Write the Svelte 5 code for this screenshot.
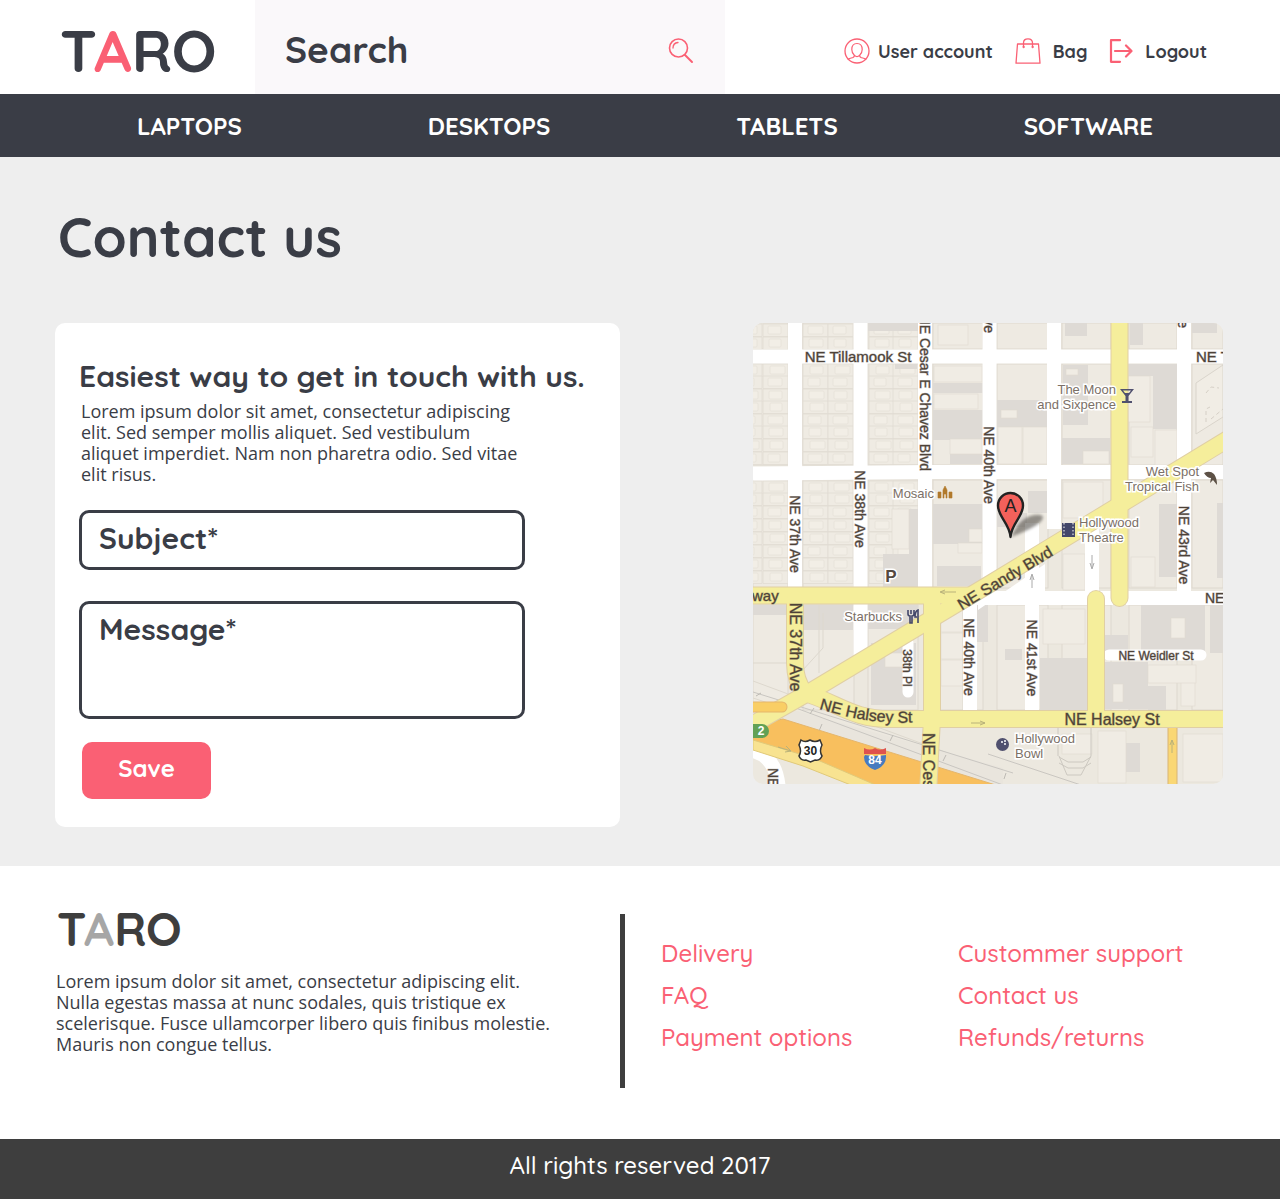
<script>
  const nav = ['LAPTOPS', 'DESKTOPS', 'TABLETS', 'SOFTWARE'];
  const links = ['Delivery', 'Custommer support', 'FAQ', 'Contact us', 'Payment options', 'Refunds/returns'];

  // City blocks: [x, y, width, height]
  const rowBands = [[0, 26], [41, 101], [157, 108], [282, 105]];
  const colBands = [[0, 35], [50, 51], [115, 50], [180, 50], [244, 51], [309, 49], [376, 48], [439, 31]];
  const blocks = rowBands.flatMap(([y, h]) => colBands.map(([x, w]) => [x, y, w, h]));

  // Small house lots inside the residential blocks: [x, y]
  const lots = [];
  for (const x of [-16, 10, 50, 75, 116, 140]) {
    for (const y of [1, 14, 41, 53, 66, 78, 91, 103, 116, 129, 158, 170, 183, 196, 209, 222, 235, 248]) {
      lots.push([x, y]);
    }
  }

  const buildings = [
    [115, 0, 50, 8], [142, 41, 22, 5], [180, 60, 50, 10], [180, 87, 50, 30], [197, 131, 33, 10], [180, 181, 50, 40],
    [156, 186, 9, 45], [130, 231, 35, 33], [184, 243, 44, 20], [244, 77, 51, 27], [275, 168, 19, 22], [244, 190, 30, 14],
    [310, 42, 25, 60], [309, 115, 48, 26], [312, 0, 22, 13], [377, 0, 13, 22], [400, 41, 24, 65], [376, 41, 26, 12],
    [439, 0, 25, 10], [406, 181, 18, 73], [464, 180, 6, 75], [388, 282, 64, 46], [457, 282, 13, 48], [287, 335, 47, 52],
    [351, 312, 24, 18], [352, 339, 43, 47], [395, 363, 18, 24], [50, 282, 50, 25], [0, 282, 35, 10], [115, 282, 50, 24],
    [118, 320, 45, 62], [252, 326, 17, 11], [373, 420, 14, 29], [224, 282, 11, 37]
  ];
  const yards = [
    [181, 43, 48, 16], [181, 71, 44, 15], [197, 116, 32, 15], [185, 2, 30, 20], [248, 87, 16, 8], [245, 104, 24, 37],
    [270, 104, 24, 37], [313, 46, 12, 6], [330, 128, 26, 13], [375, 53, 22, 46], [378, 104, 22, 30], [402, 107, 22, 35],
    [139, 186, 17, 40], [216, 206, 13, 13], [205, 220, 24, 10], [310, 159, 40, 36], [290, 286, 42, 35], [418, 295, 14, 20],
    [360, 361, 10, 18], [428, 345, 14, 38], [395, 342, 48, 18], [188, 283, 22, 26], [188, 310, 22, 26], [188, 337, 22, 26],
    [132, 330, 18, 14], [310, 231, 22, 36], [378, 234, 24, 30], [430, 411, 40, 48], [309, 411, 30, 20], [345, 408, 28, 52]
  ];

  const streets = [
    'M42 0V270', 'M107.500 0V335', 'M172 0V275', 'M236.500 0V275', 'M301 0V206', 'M431 0V275',
    'M217 282V390', 'M279 200V390', 'M339 195V275',
    'M0 33.500H470', 'M0 150.500L180 149H470', 'M180 275H470'
  ];
  const yellow = [
    'M366.500 -10V275', 'M343 276V396', 'M-10 272.500H215', 'M480 113L235 262L60 367L-10 407',
    'M42 276V340Q42 358 52 370', 'M179 273V396L175 470', 'M52 370C85 380 100 397 140 396H480'
  ];

  // Street names: [text, x, y, rotation, size, anchor]
  const names = [
    ['NE Tillamook St', 105, 33, 0, 15], ['NE Tillamook', 443, 33, 0, 15, 'start'],
    ['NE Cesar E Chavez Blvd', 172, 148, 90, 14, 'end'], ['NE 37th Ave', 42, 211, 90, 14],
    ['NE 38th Ave', 107, 186, 90, 14], ['NE 40th Ave', 236, 142, 90, 14],
    ['NE 43rd Ave', 431, 222, 90, 14], ['NE 37th Ave', 42, 324, 90, 16],
    ['NE 40th Ave', 216, 334, 90, 14], ['NE 41st Ave', 279, 335, 90, 14],
    ['38th Pl', 154, 345, 90, 12], ['NE Sandy Blvd', 252, 255, -31, 16],
    ['NE Halsey St', 359, 396, 0, 16], ['NE Weidler St', 403, 333, 0, 12],
    ['NE Cesar', 175, 410, 90, 16, 'start'], ['way', -1, 272, 0, 15, 'start'],
    ['NE Broadway', 452, 275, 0, 14, 'start'], ['NE 36th', 20, 445, 90, 14, 'start'],
    ['Ave', 236, 10, 90, 14, 'end'], ['Ave', 430, 5, 90, 14, 'end']
  ];
  const places = [
    ['Mosaic', 181, 170, 'end'], ['The Moon', 363, 66, 'end'], ['and Sixpence', 363, 81, 'end'],
    ['Wet Spot', 446, 148, 'end'], ['Tropical Fish', 446, 163, 'end'], ['Hollywood', 326, 199, 'start'],
    ['Theatre', 326, 214, 'start'], ['Starbucks', 149, 293, 'end'], ['Hollywood', 262, 415, 'start'], ['Bowl', 262, 430, 'start']
  ];
</script>

<div class="page">
  <header class="top">
    <a class="logo" href="#home">T<span>A</span>RO</a>
    <form class="search">
      <input type="search" placeholder="Search" aria-label="Search" />
      <button type="submit" aria-label="Search">
        <svg width="26" height="26" viewBox="0 0 26 26">
          <circle cx="10.500" cy="10" r="9" stroke-width="1.600" />
          <path d="M5 10Q5 5 10 4.500" stroke-width="1.300" />
          <path d="M17 17L24 24" stroke-width="2" />
        </svg>
      </button>
    </form>
    <div class="account">
      <a href="#account">
        <svg width="26" height="26" viewBox="0 0 26 26">
          <circle cx="13" cy="13" r="12" stroke-width="1.300" />
          <path d="M13 5.500c-3.500 0-5.200 2.700-5.200 6 0 2.600 1 4.400 2.500 5.700.3 1.300-.3 2-1.500 2.400-2 .5-3.600.8-4.600 1.700M13 5.500c3.500 0 5.200 2.700 5.200 6 0 2.600-1 4.400-2.500 5.700-.3 1.300.3 2 1.500 2.400 2 .5 3.600.8 4.600 1.700M10.300 17.200Q13 20 15.700 17.200" stroke-width="1.200" />
        </svg>
        User account
      </a>
      <a class="bag" href="#bag">
        <svg width="26" height="26" viewBox="0 0 26 26">
          <path d="M2.500 6H23.500L25 25.200H1Z" stroke-width="1.300" />
          <path d="M8.500 9V5Q8.500 .8 13 .8T17.500 5V9" stroke-width="1.300" />
          <circle cx="8.500" cy="9" r=".7" /><circle cx="17.500" cy="9" r=".7" />
        </svg>
        Bag
      </a>
      <a class="logout" href="#logout">
        <svg width="24" height="26" viewBox="0 0 24 26">
          <path d="M11 2.200H2V23.800H11" stroke-width="2.200" />
          <path d="M6 13H22M17 7.500L22.500 13L17 18.500" stroke-width="2.200" />
        </svg>
        Logout
      </a>
    </div>
  </header>

  <nav>
    {#each nav as item}
      <a href="#{item.toLowerCase()}">{item}</a>
    {/each}
  </nav>

  <main>
    <h1>Contact us</h1>
    <div class="columns">
      <section class="card">
        <h2>Easiest way to get in touch with us.</h2>
        <p>Lorem ipsum dolor sit amet, consectetur adipiscing elit. Sed semper mollis aliquet. Sed vestibulum aliquet imperdiet. Nam non pharetra odio. Sed vitae elit risus.</p>
        <form>
          <input type="text" placeholder="Subject*" aria-label="Subject" required />
          <textarea placeholder="Message*" aria-label="Message" required></textarea>
          <button type="submit">Save</button>
        </form>
      </section>

      <svg class="map" viewBox="0 0 470 461" role="img" aria-label="Map of NE Sandy Blvd">
        <rect width="470" height="461" fill="#ece8df" />
        <g fill="#eeeae2" stroke="#d9d4cb" stroke-width=".8">
          {#each blocks as [x, y, w, h]}<rect {x} {y} width={w} height={h} />{/each}
        </g>
        <g stroke="#e1dcd3" stroke-width=".8">
          {#each lots as [x, y], i}
            <path d="M{x} {y}h25v12.500h-25z" fill="#efebe3" />
            <rect x={x + 5 + (i % 3)} y={y + 2} width={15 - (i % 4)} height="8" rx="1" fill="#f2eee6" stroke="#e6e1d8" />
          {/each}
        </g>
        <g fill="#dedad5">
          {#each buildings as [x, y, w, h]}<rect {x} {y} width={w} height={h} />{/each}
        </g>
        <g fill="#f0ece4" stroke="#dfdad0" stroke-width=".6">
          {#each yards as [x, y, w, h]}<rect {x} {y} width={w} height={h} />{/each}
        </g>
        <path d="M0 358L235 445M0 375L235 452M70 290V325L38 360M0 340H35M66 282V350M210 282V387" fill="none" stroke="#ddd8ce" />
        <path d="M443 111V60L470 42V94Z" fill="#f1ede5" stroke="#d9d4cb" />
        <path d="M453 99V86l4-2 M458 96L470 86M453 70l5-6 8 1" fill="none" stroke="#d5cfc6" stroke-dasharray="4 3" />

        <g fill="none" stroke="#fff" stroke-width="14">
          {#each streets as d}<path {d} />{/each}
          <path d="M0 428Q25 434 26 470" />
          <path d="M155 320V369M356 332H448" stroke-width="11" stroke-linecap="round" />
        </g>
        <path d="M225 287L292 241V282H225Z" fill="#fff" />

        <path d="M0 378L30 384L250 445V461H110L0 419Z" fill="#e9e5dd" />
        <path d="M0 369L260 450M24 378L250 462M235 431L340 466" fill="none" stroke="#c9c6c1" />
        <path d="M3 373l5-3M57 391l4-6M66 408l3-7M137 418l3-6M190 438l3-6M251 456l2-6" stroke="#bdbab4" />
        <path d="M0 402L30 396L262 468H125L60 438L0 420Z" fill="#f8bf5e" stroke="#e5b66c" />
        <path d="M0 417L60 435L132 466H108L50 443L0 427Z" fill="#f8e391" stroke="#e0c979" />
        <path d="M419.500 400V470" stroke="#d8b476" stroke-width="10" />
        <path d="M419.500 400V470" stroke="#fad774" stroke-width="8" />

        <g fill="none" stroke-linecap="round" stroke-linejoin="round">
          <g stroke="#e0cfa4" stroke-width="18">{#each yellow as d}<path {d} />{/each}</g>
          <g stroke="#f5ee9b" stroke-width="16">{#each yellow as d}<path {d} />{/each}</g>
          <path d="M-8 384H29" stroke="#e5b66c" stroke-width="11" />
          <path d="M-8 384H29" stroke="#f9ce65" stroke-width="9" />
        </g>

        <g fill="none" stroke="#b9b27a">
          <path d="M203 269H188M192 267L187 269L192 271M218 400H232M227 398L232 400L227 402M419 430V417M417 422L419 417L421 422M25 424L38 428M33 423L38 428L32 429" />
          <path d="M279 265V252M277 257L279 251L281 257M339 232V245M337 240L339 246L341 240" stroke="#aaa" />
          <path d="M306 433L314 452H328L338 433M306 440L315 445H330L338 440M306 434L315 439H330L338 434M305 405V433M338 405V433" stroke="#ccc8c0" />
        </g>

        <g class="streetnames">
          {#each names as [text, x, y, angle, size, anchor]}
            <text transform="translate({x} {y}) rotate({angle})" font-size={size} text-anchor={anchor ?? 'middle'} dominant-baseline="central">{text}</text>
          {/each}
          <path id="halsey" d="M66 386C95 394 120 402 172 399" fill="none" stroke="none" />
          <text font-size="16"><textPath href="#halsey">NE Halsey St</textPath></text>
        </g>
        <g class="places">
          {#each places as [text, x, y, anchor]}
            <text {x} {y} text-anchor={anchor} dominant-baseline="central">{text}</text>
          {/each}
          <text class="parking" x="138" y="253" text-anchor="middle" dominant-baseline="central">P</text>
        </g>

        <path d="M185 175v-6h3v6zM190 175v-8l2-4 2 4v8h-1v-4h-2v4zM196 175v-6h3v6z" fill="#b17a2c" stroke="#b17a2c" stroke-width=".6" />
        <path d="M367 66H381L375.500 73V78H379V80H369V78H372.500V73ZM370 67.500L372 70H376L378 67.500Z" fill="#50506e" fill-rule="evenodd" />
        <path d="M451 150Q457 147 461 151Q464 155 464 162L460 157L457 160L458 155Q454 155 451 150Z" fill="#5d5146" />
        <path d="M309 200h13v14h-13z" fill="#43476a" />
        <path d="M311 200v14M320 200v14" stroke="#fff" stroke-dasharray="1.500 2" />
        <path d="M155 287V291Q155 293 157 293V300H159V293Q161 293 161 291V287M158 287V291M165 300V287Q162 288 162 294H164" fill="none" stroke="#43476a" stroke-width="1.600" />
        <circle cx="249.500" cy="421.500" r="6.500" fill="#50506e" />
        <g fill="#fff"><circle cx="249" cy="419" r="1" /><circle cx="252" cy="418" r="1" /><circle cx="252" cy="421" r="1" /></g>

        <rect x="-6" y="401" width="22" height="14" rx="7" fill="#62a155" />
        <text x="8" y="408" class="shield" fill="#fff" font-size="12">2</text>
        <path d="M48 417Q52 420 57 417Q62 420 67 417L69 422Q66 428 69 433Q67 438 62 437L57.500 439L53 437Q48 438 46 433Q49 428 46 422Z" fill="#fff" stroke="#333" stroke-width="1.500" />
        <text x="57.500" y="427.500" class="shield" fill="#222" font-size="12">30</text>
        <path d="M112 432Q122 434 133 432V434Q133 443 122 447Q111 443 111 434Z" fill="#477bbf" />
        <path d="M111 425Q117 428 122 425Q127 428 133 425V431H111Z" fill="#df524d" />
        <text x="122" y="437" class="shield" fill="#fff" font-size="12">84</text>

        <defs>
          <filter id="soft" x="-20%" y="-40%" width="140%" height="180%"><feGaussianBlur stdDeviation="1.700" /></filter>
        </defs>
        <path d="M258 214Q266 195 281 192Q293 191 289 197Q284 204 258 214Z" fill="#55514c" opacity=".6" filter="url(#soft)" />
        <path d="M257.500 214C256.500 200 245 194 245 182.500A12.500 12.500 0 0 1 270 182.500C270 194 258.500 200 257.500 214Z" fill="#f3615b" stroke="#222" stroke-width="2.400" stroke-linejoin="round" />
        <text x="257.500" y="183" class="pin">A</text>
      </svg>
    </div>
  </main>

  <footer>
    <div class="about">
      <a class="logo small" href="#home">T<span>A</span>RO</a>
      <p>Lorem ipsum dolor sit amet, consectetur adipiscing elit. Nulla egestas massa at nunc sodales, quis tristique ex scelerisque. Fusce ullamcorper libero quis finibus molestie. Mauris non congue tellus.</p>
    </div>
    <div class="links">
      {#each links as link}
        <a href="#{link.toLowerCase().replace(' ', '-')}">{link}</a>
      {/each}
    </div>
  </footer>
  <div class="rights">All rights reserved 2017</div>
</div>

<style>
  :global(body) { margin: 0; background: #fff; }
  .page { --ink: #3a3d46; --pink: #fa6074; font-family: Quicksand, Lato, sans-serif; font-weight: 700; color: var(--ink); }
  .page * { box-sizing: border-box; }
  a { color: inherit; text-decoration: none; }
  input, textarea, button { font: inherit; color: inherit; border: 0; background: none; padding: 0; margin: 0; }
  input::placeholder, textarea::placeholder { color: var(--ink); opacity: 1; }
  svg { display: block; flex: none; }
  form { display: flex; flex-direction: column; align-items: flex-start; }

  .top { display: grid; grid-template-columns: minmax(0, 255fr) minmax(0, 470fr) minmax(0, 555fr); height: 94px; }
  .logo { font-size: 59px; line-height: 56px; font-weight: 700; white-space: nowrap; }
  .logo span { color: var(--pink); }
  .top .logo { padding: 22px 0 0 60px; }
  .search { flex-direction: row; align-items: center; padding: 0 31px 0 30px; background: #faf8fa; }
  .search input { flex: 1; min-width: 0; height: 60px; padding-top: 4px; font-size: 37px; outline: 0; }
  .search button { margin-top: 8px; }
  .search svg, .account svg { fill: none; stroke: var(--pink); stroke-linecap: round; stroke-linejoin: round; }
  .account { display: flex; align-items: center; justify-content: flex-end; gap: 22px; padding: 8px 73px 0 0; font-size: 18px; }
  .account a { display: flex; align-items: center; gap: 8px; white-space: nowrap; }
  .account .bag, .account .logout { gap: 12px; }

  nav { display: flex; justify-content: space-between; align-items: center; height: 63px; padding: 0 127px 0 137px; background: var(--ink); color: #fff; font-size: 24px; }

  main { background: #eee; padding: 48px 57px 39px 55px; }
  h1 { margin: 0 0 54px 3px; font-size: 55px; line-height: 64px; font-weight: 700; }
  .columns { display: flex; justify-content: space-between; align-items: flex-start; gap: 40px; }
  .card { flex: 0 1 565px; padding: 35px 24px 28px; background: #fff; border-radius: 10px; }
  h2 { margin: 0; font-size: 30px; line-height: 36px; font-weight: 700; }
  p { margin: 0; font-family: "Open Sans", sans-serif; font-weight: 400; font-size: 18px; line-height: 21px; }
  .card p { max-width: 446px; padding: 7px 0 0 2px; }
  .card input, .card textarea { width: 446px; max-width: 100%; border: 3px solid var(--ink); border-radius: 10px; padding: 0 17px; font-size: 30px; }
  .card input { height: 60px; margin: 25px 0 31px; padding-bottom: 4px; }
  .card textarea { height: 118px; padding-top: 7px; line-height: 36px; resize: none; }
  .card button { margin: 23px 0 0 3px; width: 129px; height: 57px; padding-bottom: 5px; border-radius: 10px; background: var(--pink); color: #fff; font-size: 24px; }
  .map { flex: 0 1 470px; min-width: 0; height: auto; border-radius: 10px; font-family: "Liberation Sans", Arial, sans-serif; font-weight: 400; }
  .streetnames text { fill: #4d4238; stroke: #4d4238; stroke-opacity: .4; stroke-width: 1px; paint-order: stroke; }
  .places text { font-size: 13px; fill: #7b7067; stroke: #fff; stroke-width: 3px; paint-order: stroke; }
  .places .parking { font-size: 17px; font-weight: 700; fill: #55493f; }
  .shield { font-weight: 700; text-anchor: middle; dominant-baseline: central; }
  .pin { font-size: 18px; fill: #222; text-anchor: middle; dominant-baseline: central; }

  footer { display: grid; grid-template-columns: 620fr 660fr; padding: 48px 0 51px; background: #fff; }
  .about { padding-left: 56px; }
  .small { display: block; font-size: 47px; line-height: 45px; color: #3e3e3e; padding: 0 0 12px 1px; margin-top: -8px; }
  .small span { color: #a6a6a6; }
  .about p { max-width: 500px; padding-top: 8px; }
  .links { display: grid; grid-template-columns: 297fr 322fr; grid-auto-rows: 42px; align-items: center; min-height: 174px; padding: 18px 0 0 36px; border-left: 5px solid #3e3e3e; color: var(--pink); font-size: 24px; font-weight: 500; }
  .rights { padding: 11px 0 19px; background: #3e3e3e; color: #fff; font-size: 24px; line-height: 30px; font-weight: 500; text-align: center; }
</style>
